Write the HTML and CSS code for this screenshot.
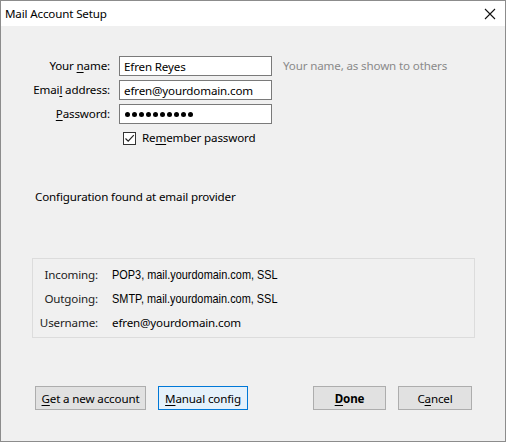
FILE: index.html
```html
<!DOCTYPE html>
<html lang="en">
<head>
    <meta charset="UTF-8">
    <title>Mail Account Setup</title>
    <link rel="stylesheet" href="styles.css">
</head>
<body>
    <div class="window">
        <!-- Title bar -->
        <div class="titlebar">
            <span class="title">Mail Account Setup</span>
            <svg class="close" width="12" height="12" viewBox="0 0 12 12">
                <path d="M1 1 L11 11 M11 1 L1 11" stroke="#111" stroke-width="1.1" fill="none"/>
            </svg>
        </div>

        <div class="content">
            <!-- Account form -->
            <div class="form">
                <label for="name">Your <u>n</u>ame:</label>
                <input type="text" id="name" value="Efren Reyes">
                <span class="hint">Your name, as shown to others</span>

                <label for="email">Emai<u>l</u> address:</label>
                <input type="text" id="email" value="efren@yourdomain.com">
                <span></span>

                <label><u>P</u>assword:</label>
                <div class="field password">
                    <span class="dot"></span><span class="dot"></span><span class="dot"></span><span class="dot"></span><span class="dot"></span>
                    <span class="dot"></span><span class="dot"></span><span class="dot"></span><span class="dot"></span><span class="dot"></span>
                </div>
                <span></span>

                <span></span>
                <label class="remember">
                    <span class="checkbox">
                        <svg width="11" height="11" viewBox="0 0 11 11">
                            <path d="M1.5 5.5 L4.2 8.2 L9.8 2.2" stroke="#222" stroke-width="1.2" fill="none"/>
                        </svg>
                    </span>
                    <span>Re<u>m</u>ember password</span>
                </label>
            </div>

            <p class="status">Configuration found at email provider</p>

            <!-- Detected settings -->
            <div class="config">
                <div class="config-row">
                    <span class="config-label">Incoming:</span>
                    <span class="config-value narrow">POP3, mail.yourdomain.com, SSL</span>
                </div>
                <div class="config-row">
                    <span class="config-label">Outgoing:</span>
                    <span class="config-value narrow">SMTP, mail.yourdomain.com, SSL</span>
                </div>
                <div class="config-row">
                    <span class="config-label">Username:</span>
                    <span class="config-value">efren@yourdomain.com</span>
                </div>
            </div>
        </div>

        <!-- Dialog buttons -->
        <div class="buttons">
            <div class="button-group">
                <button class="btn new-account"><u>G</u>et a new account</button>
                <button class="btn manual focused"><u>M</u>anual config</button>
            </div>
            <div class="button-group">
                <button class="btn done"><u>D</u>one</button>
                <button class="btn cancel">C<u>a</u>ncel</button>
            </div>
        </div>
    </div>
</body>
</html>
```

FILE: styles.css
```css
/* Windows style dialog */
* {
    box-sizing: border-box;
}
body {
    margin: 0;
    font-family: "Noto Sans", "Open Sans", sans-serif;
    font-size: 11.6px;
    letter-spacing: -0.15px;
    color: #000;
}
u {
    text-decoration-thickness: 1px;
    text-underline-offset: 2px;
}
.window {
    width: 506px;
    height: 442px;
    border: 1px solid #8c8c8c;
    background-color: #f0f0f0;
    display: flex;
    flex-direction: column;
}
.titlebar {
    height: 25px;
    background: white;
    display: flex;
    align-items: center;
    justify-content: space-between;
    padding: 0 9px 0 4px;
}
.close {
    display: block;
}
.content {
    flex: 1;
}
.form {
    display: grid;
    grid-template-columns: 109px 153px auto;
    column-gap: 9px;
    row-gap: 4px;
    margin-top: 30px;
}
.form > label {
    text-align: right;
    line-height: 20px;
}
.form input,
.field {
    height: 20px;
    width: 153px;
    border: 1px solid #7a7a7a;
    padding: 0 4px;
    font: inherit;
    letter-spacing: inherit;
    background: white;
    outline: none;
}
.field.password {
    display: flex;
    align-items: center;
    gap: 2px;
    padding-left: 5px;
}
.dot {
    width: 5px;
    height: 5px;
    border-radius: 50%;
    background: #000;
}
.hint {
    color: #8a8a8a;
    line-height: 20px;
    padding-left: 2px;
}
.form .remember {
    display: flex;
    align-items: center;
    gap: 6px;
    padding-left: 4px;
    line-height: 20px;
}
.checkbox {
    width: 13px;
    height: 13px;
    border: 1px solid #333;
    background: white;
    display: flex;
    align-items: center;
    justify-content: center;
}
.status {
    margin: 41px 0 0 34px;
}
.config {
    margin: 54px 0 0 31px;
    width: 443px;
    height: 80px;
    border: 1px solid #dcdcdc;
    padding-top: 3px;
}
.config-row {
    display: flex;
    height: 24px;
    align-items: center;
    gap: 14px;
}
.config-label {
    width: 65px;
    text-align: right;
    color: #222;
}
.config-value.narrow {
    display: inline-block;
    font-family: "Liberation Sans", sans-serif;
    font-size: 13px;
    letter-spacing: 0;
    transform: scaleX(0.84);
    transform-origin: left center;
}
.buttons {
    display: flex;
    justify-content: space-between;
    padding: 0 33px 31px 34px;
}
.button-group {
    display: flex;
    gap: 12px;
}
.btn {
    height: 24px;
    border: 1px solid #adadad;
    background-color: #e1e1e1;
    font: inherit;
    letter-spacing: inherit;
    color: #000;
    padding: 0;
}
.new-account {
    width: 111px;
}
.manual {
    width: 90px;
}
.btn.focused {
    background-color: #e5f1fb;
    border-color: #0078d7;
}
.done {
    width: 73px;
    font-weight: bold;
}
.cancel {
    width: 74px;
}
```
